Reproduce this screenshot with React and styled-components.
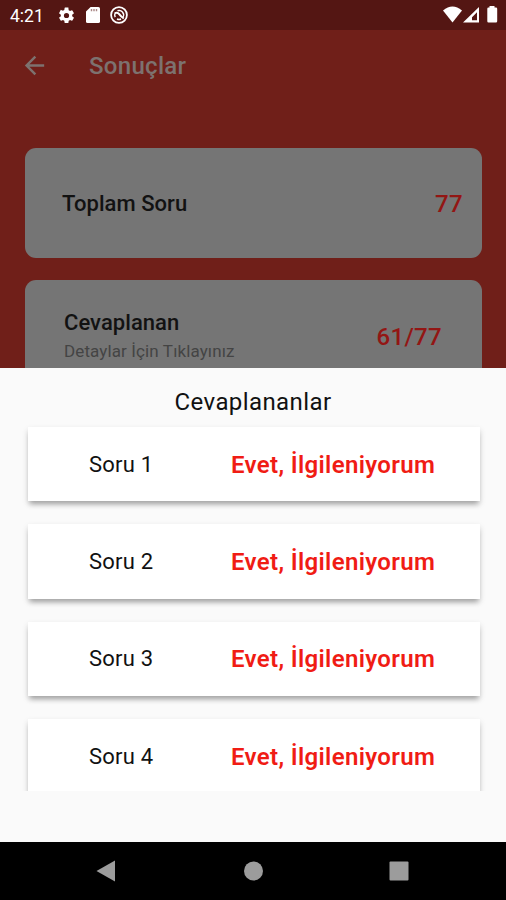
import React from "react";
import styled, { createGlobalStyle } from "styled-components";

const GlobalStyle = createGlobalStyle`
  * {
    box-sizing: border-box;
  }

  body {
    margin: 0;
    font-family: Roboto, sans-serif;
    background: #000;
  }
`;

const Phone = styled.div`
  position: relative;
  display: flex;
  flex-direction: column;
  width: 506px;
  height: 900px;
  overflow: hidden;
`;

// The page sits behind an open sheet, so its colours are the dimmed ones
const Page = styled.main`
  flex: 1;
  min-height: 0;
  overflow: hidden;
  background: #701f19;
`;

const StatusBar = styled.div`
  display: flex;
  align-items: center;
  justify-content: space-between;
  height: 30px;
  padding: 0 8px 0 10px;
  background: #541613;
  color: #fff;
`;

const StatusGroup = styled.div`
  display: flex;
  align-items: center;
  gap: 10px;
`;

const Clock = styled.span`
  width: 35px;
  margin-right: 2px;
  font-size: 17.5px;
  line-height: 30px;
  padding-top: 1px;
`;

const AppBar = styled.header`
  display: flex;
  align-items: center;
  height: 70px;
  padding: 0 20px;
  gap: 40px;
  color: #7d726f;

  h1 {
    margin: 1px 0 0;
    font-size: 24px;
    font-weight: 500;
    letter-spacing: 0.3px;
  }
`;

const Results = styled.section`
  display: flex;
  flex-direction: column;
  gap: 22px;
  padding: 48px 24px 0 25px;
`;

const ResultCard = styled.div`
  display: flex;
  align-items: center;
  justify-content: space-between;
  height: ${(props) => (props.$tall ? "114px" : "110px")};
  padding: ${(props) => (props.$tall ? "0 40px 0 39px" : "2px 19px 0 37px")};
  border-radius: 11px;
  background: #757575;
`;

const Label = styled.div`
  color: #121212;
  font-size: 22px;
  font-weight: 500;
  line-height: 28px;
  letter-spacing: 0.05px;
`;

const Hint = styled.div`
  color: #444;
  font-size: 17px;
  line-height: 28px;
  letter-spacing: 0.12px;
`;

const Score = styled.div`
  color: #931614;
  font-size: 24px;
  font-weight: 500;
  letter-spacing: 0.3px;
`;

const Sheet = styled.section`
  position: absolute;
  left: 0;
  right: 0;
  bottom: 58px;
  height: 474px;
  background: #fafafa;

  h2 {
    margin: 0;
    padding-top: 6px;
    height: 53px;
    text-align: center;
    color: #111;
    font-size: 24px;
    font-weight: 400;
    line-height: 56px;
    letter-spacing: 0.4px;
  }
`;

const List = styled.div`
  display: flex;
  flex-direction: column;
  gap: 23px;
  height: 370px;
  padding: 6px 26px 0 28px;
  overflow: hidden;
`;

const Question = styled.div`
  display: grid;
  grid-template-columns: 142px 1fr;
  align-items: center;
  flex: none;
  height: 74.3px;
  padding-left: 61px;
  background: #fff;
  box-shadow: 0 5px 5px -2px rgba(0, 0, 0, 0.24), 0 3px 6px rgba(0, 0, 0, 0.16);
`;

const QuestionName = styled.span`
  color: #111;
  font-size: 22px;
  letter-spacing: 0.2px;
`;

const Answer = styled.span`
  padding-top: 1px;
  color: #f01c14;
  font-size: 24px;
  font-weight: 600;
  letter-spacing: 0.34px;
`;

const NavBar = styled.nav`
  display: flex;
  align-items: center;
  justify-content: space-between;
  height: 58px;
  padding: 0 97px 0 96px;
  background: #000;
  color: #9c9c9c;
`;

const questions = [1, 2, 3, 4];

function BackArrow() {
  return (
    <svg width="29" height="29" viewBox="0 0 24 24" fill="currentColor">
      <path d="M20 11H7.83l5.59-5.59L12 4l-8 8 8 8 1.41-1.41L7.83 13H20v-2z" />
    </svg>
  );
}

function GearIcon() {
  return (
    <svg width="19" height="19" viewBox="0 0 24 24" fill="currentColor">
      <path d="M19.14 12.94c.04-.3.06-.61.06-.94s-.02-.64-.07-.94l2.03-1.58a.49.49 0 0 0 .12-.61l-1.92-3.32a.49.49 0 0 0-.59-.22l-2.39.96a7 7 0 0 0-1.62-.94l-.36-2.54A.48.48 0 0 0 13.92 2h-3.84a.48.48 0 0 0-.47.41l-.36 2.54c-.59.24-1.13.57-1.62.94l-2.39-.96a.48.48 0 0 0-.59.22L2.74 8.87a.47.47 0 0 0 .12.61l2.03 1.58a6 6 0 0 0 0 1.88l-2.03 1.58a.49.49 0 0 0-.12.61l1.92 3.32c.12.22.37.29.59.22l2.39-.96c.5.38 1.03.7 1.62.94l.36 2.54c.05.24.24.41.48.41h3.84c.24 0 .44-.17.47-.41l.36-2.54a7 7 0 0 0 1.62-.94l2.39.96c.22.08.47 0 .59-.22l1.92-3.32a.47.47 0 0 0-.12-.61l-2.01-1.58zM12 15.3a3.3 3.3 0 1 1 0-6.6 3.3 3.3 0 0 1 0 6.6z" />
    </svg>
  );
}

function SdCardIcon() {
  return (
    <svg width="14" height="16" viewBox="0 0 14 16">
      <path d="M4.6 0H12.4q1.6 0 1.6 1.6V14.4Q14 16 12.4 16H1.6Q0 16 0 14.4V4.6z" fill="#fff" />
      <path d="M5.5 2v2.2M8 2v2.2M10.5 2v2.2" stroke="#a98785" strokeWidth="1.4" />
    </svg>
  );
}

function SyncOffIcon() {
  return (
    <svg width="18" height="18" viewBox="0 0 18 18" fill="none" stroke="#fff">
      <circle cx="9" cy="9" r="7.9" strokeWidth="1.8" />
      <path d="M5.2 11.2A4.4 4.4 0 0 1 5.2 7M7.5 4.8A4.4 4.4 0 0 1 13 11M11 13A4.4 4.4 0 0 1 7 13" strokeWidth="1.5" />
      <path d="M4.8 7.2Q7.5 5.8 9.2 8.2T13.8 12.5" strokeWidth="2" />
    </svg>
  );
}

function SignalIcons() {
  return (
    <svg width="55" height="18" viewBox="0 0 55 18">
      <path d="M0 4.5Q9.5-3.5 19 4.5L9.5 16.5z" fill="#fff" />
      <path fillRule="evenodd" d="M36 1v15.5H20z M34 6.2L29 11.2V14.2H34z" fill="#fff" />
      <path d="M46.5 0h5v1.6h1.5q1.2 0 1.2 1.2v12.5q0 1.2-1.2 1.2h-7.5q-1.2 0-1.2-1.2V2.8q0-1.2 1.2-1.2H46.5z" fill="#fff" />
    </svg>
  );
}

export default function App() {
  return (
    <>
      <GlobalStyle />
      <Phone>
        <Page>
          <StatusBar>
            <StatusGroup>
              <Clock>4:21</Clock>
              <GearIcon />
              <SdCardIcon />
              <SyncOffIcon />
            </StatusGroup>
            <SignalIcons />
          </StatusBar>
          <AppBar>
            <BackArrow />
            <h1>Sonuçlar</h1>
          </AppBar>
          <Results>
            <ResultCard>
              <Label>Toplam Soru</Label>
              <Score>77</Score>
            </ResultCard>
            <ResultCard $tall>
              <div>
                <Label>Cevaplanan</Label>
                <Hint>Detaylar İçin Tıklayınız</Hint>
              </div>
              <Score>61/77</Score>
            </ResultCard>
          </Results>
        </Page>
        <Sheet>
          <h2>Cevaplananlar</h2>
          <List>
            {questions.map((number) => (
              <Question key={number}>
                <QuestionName>Soru {number}</QuestionName>
                <Answer>Evet, İlgileniyorum</Answer>
              </Question>
            ))}
          </List>
        </Sheet>
        <NavBar>
          <svg width="20" height="22" viewBox="0 0 20 22" fill="currentColor">
            <path d="M19 .5v21L.5 11z" />
          </svg>
          <svg width="20" height="20" viewBox="0 0 20 20" fill="currentColor">
            <circle cx="10.5" cy="10" r="9.5" />
          </svg>
          <svg width="20" height="20" viewBox="0 0 20 20" fill="currentColor">
            <rect x=".5" y=".5" width="19" height="19" rx="1" />
          </svg>
        </NavBar>
      </Phone>
    </>
  );
}
